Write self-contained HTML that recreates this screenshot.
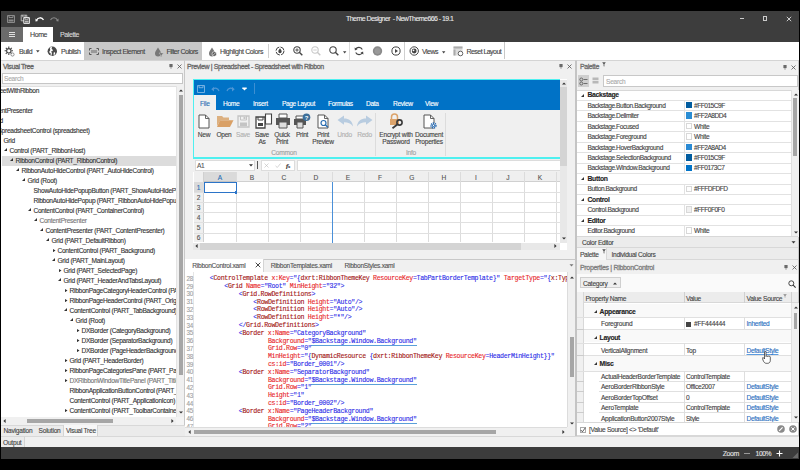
<!DOCTYPE html>
<html><head><meta charset="utf-8">
<style>
*{margin:0;padding:0;box-sizing:border-box}
html,body{width:800px;height:470px;overflow:hidden;background:#000}
body{position:relative;font-family:"Liberation Sans",sans-serif;font-size:7px;color:#333}
.a{position:absolute}
.t{position:absolute;white-space:nowrap;line-height:8px;font-size:7px;letter-spacing:-0.35px;-webkit-text-stroke:0.12px currentColor}
</style></head><body>
<!-- window -->
<div class="a" id="win" style="left:1px;top:11px;width:798px;height:448px;background:#f0f0f0"></div>
<!-- title bar -->
<div class="a" style="left:1px;top:11px;width:798px;height:31px;background:#3d3d3d"></div>
<svg class="a" style="left:6px;top:14px" width="10" height="10" viewBox="0 0 10 10"><path d="M1.5 1.5h7v7h-7z" fill="none" stroke="#8a8a8a" stroke-width="1"/><path d="M3 1.5v2h4v-2" fill="none" stroke="#8a8a8a"/><rect x="2.5" y="5.5" width="5" height="2" fill="#8a8a8a"/></svg>
<svg class="a" style="left:20px;top:14px" width="11" height="11" viewBox="0 0 11 11"><path d="M1.2 1.2h5.6v5.6H1.2z" fill="none" stroke="#d0d0d0" stroke-width="0.8"/><path d="M2.5 1.2v1.6h3V1.2" fill="none" stroke="#d0d0d0" stroke-width="0.6"/><path d="M3.8 3.6h5.6v5.8H3.8z" fill="#3d3d3d" stroke="#fff" stroke-width="0.9"/><path d="M5 3.6v1.7h3.2V3.6" fill="none" stroke="#fff" stroke-width="0.6"/><rect x="4.8" y="6.6" width="3.8" height="2" fill="#bbb"/></svg>
<svg class="a" style="left:35px;top:15px" width="10" height="7" viewBox="0 0 10 7"><path d="M1.5 5.2C3 2 7 2 8.5 5" fill="none" stroke="#fff" stroke-width="1.3"/><path d="M0.5 3.5l2.5 2.5l-2.5 0.5z" fill="#fff"/></svg>
<svg class="a" style="left:49px;top:15px" width="10" height="7" viewBox="0 0 10 7"><path d="M1.5 5C3 2 7 2 8.5 5.2" fill="none" stroke="#8a8a8a" stroke-width="1.1"/><path d="M9.5 3.5l-2.5 2.5l2.5 0.5z" fill="#8a8a8a"/></svg>
<div class="t" style="left:346px;top:15px;color:#e8e8e8;letter-spacing:-0.55px">Theme Designer &nbsp;- NewTheme666 - 19.1</div>
<div class="a" style="left:739.5px;top:18px;width:4.5px;height:0.8px;background:#ccc"></div>
<div class="a" style="left:763px;top:16px;width:4px;height:4.5px;border:0.8px solid #ccc"></div>
<svg class="a" style="left:785.5px;top:15.5px" width="6" height="6" viewBox="0 0 6 6"><path d="M0.8 0.8L5.2 5.2M5.2 0.8L0.8 5.2" stroke="#ddd" stroke-width="0.9"/></svg>
<!-- tab row -->
<div class="a" style="left:1px;top:27px;width:22px;height:15px;background:#6b6b6b"></div>
<div class="a" style="left:8.5px;top:31.5px;width:6px;height:1px;background:#e0e0e0"></div>
<div class="a" style="left:8.5px;top:33.8px;width:6px;height:1px;background:#e0e0e0"></div>
<div class="a" style="left:8.5px;top:36px;width:6px;height:1px;background:#e0e0e0"></div>
<div class="a" style="left:23px;top:27px;width:30px;height:15px;background:#fff"></div>
<div class="t" style="left:30px;top:31px;color:#444;letter-spacing:-0.4px">Home</div>
<div class="t" style="left:60px;top:31px;color:#d8d8d8;letter-spacing:-0.4px">Palette</div>
<!-- ribbon -->
<div class="a" style="left:1px;top:42px;width:798px;height:19px;background:#fff;border-bottom:1px solid #d8d8d8"></div>
<div class="a" style="left:84px;top:42px;width:118px;height:18px;background:#c8c8c8"></div>
<svg class="a" style="left:4px;top:45.5px" width="11" height="11" viewBox="0 0 11 11"><g fill="none" stroke="#444" stroke-width="1.1"><circle cx="4.8" cy="4.8" r="2.2"/><path d="M4.8 0.6v1.6M4.8 7.4v1.6M0.6 4.8h1.6M7.4 4.8h1.6M1.8 1.8l1.1 1.1M6.7 6.7l1.1 1.1M1.8 7.8l1.1-1.1M6.7 2.9l1.1-1.1"/></g><circle cx="8.5" cy="8.5" r="1.6" fill="#fff" stroke="#777" stroke-width="0.8"/></svg>
<div class="t" style="left:19px;top:48px;letter-spacing:-0.5px;color:#444">Build</div>
<svg class="a" style="left:36px;top:50px" width="4" height="3" viewBox="0 0 4 3"><path d="M0 0.3h3.6L1.8 2.6z" fill="#444"/></svg>
<svg class="a" style="left:47px;top:45.5px" width="11" height="11" viewBox="0 0 11 11"><circle cx="5.3" cy="5.3" r="4.7" fill="#4a4a4a"/><path d="M3 1.6C2.6 2.6 3.4 3.2 3.2 4.2C3 5 2 5.2 2.3 6.2C2.6 7 3.6 6.8 3.8 7.8L3.5 9.6L4.4 9.7L4.8 8C5.2 7 4.6 6.2 4 5.6C4.6 5.2 5.6 5.4 5.8 4.6C6 3.6 5 3.4 4.6 2.6L5.2 0.8z" fill="#fff"/><path d="M6.8 6.4C7.6 6.2 8.4 6.6 8.2 7.6L7.2 9.2L6.6 8.8C6.8 8 6.4 7 6.8 6.4z" fill="#fff"/></svg>
<div class="t" style="left:61px;top:48px;letter-spacing:-0.5px;color:#444">Publish</div>
<svg class="a" style="left:88.5px;top:47.5px" width="10" height="7" viewBox="0 0 10 7"><path d="M0.5 2.5V0.5h2M7.5 0.5h2v2M9.5 4.5v2h-2M2.5 6.5h-2v-2" fill="none" stroke="#555" stroke-width="1"/><rect x="2" y="2" width="6" height="3" fill="#999"/></svg>
<div class="t" style="left:102px;top:48px;letter-spacing:-0.5px;color:#444">Inspect Element</div>
<svg class="a" style="left:153.5px;top:46.5px" width="10" height="10" viewBox="0 0 10 10"><path d="M4 0.5C2.5 3 1 4.5 1 6.5a3 3 0 0 0 6 0C7 4.5 5.5 3 4 0.5z" fill="#777"/><path d="M5 6h4.5l-1.8 2v1.5l-1 0.5v-2z" fill="#666" stroke="#c8c8c8" stroke-width="0.5"/></svg>
<div class="t" style="left:166.5px;top:48px;letter-spacing:-0.5px;color:#444">Filter Colors</div>
<svg class="a" style="left:207.5px;top:46.5px" width="10" height="10" viewBox="0 0 10 10"><path d="M4 0.5C2.5 3 1 4.5 1 6.5a3 3 0 0 0 6 0C7 4.5 5.5 3 4 0.5z" fill="#777"/><circle cx="6.3" cy="7" r="2.3" fill="#555" stroke="#fff" stroke-width="0.6"/><path d="M5.3 8l2-2" stroke="#fff" stroke-width="0.7"/></svg>
<div class="t" style="left:220px;top:48px;letter-spacing:-0.4px;color:#444">Highlight Colors</div>
<div class="a" style="left:268px;top:44px;width:1px;height:14px;background:#d0d0d0"></div>
<svg class="a" style="left:274.5px;top:46px" width="10" height="10" viewBox="0 0 10 10"><circle cx="5" cy="5" r="4" fill="none" stroke="#444" stroke-width="1" stroke-dasharray="5 1.3"/><path d="M5 2.3C4 3.8 3.3 4.6 3.3 5.6a1.7 1.7 0 0 0 3.4 0C6.7 4.6 6 3.8 5 2.3z" fill="#444"/></svg>
<svg class="a" style="left:292.5px;top:45.5px" width="10" height="10" viewBox="0 0 10 10"><circle cx="4" cy="4" r="3.2" fill="none" stroke="#444" stroke-width="1.1"/><path d="M6.3 6.3l3 3" stroke="#444" stroke-width="1.4"/><path d="M2.3 4h3.4M4 2.3v3.4" stroke="#444" stroke-width="0.9"/></svg>
<svg class="a" style="left:310.5px;top:45.5px" width="10" height="10" viewBox="0 0 10 10"><circle cx="4" cy="4" r="3.2" fill="none" stroke="#c8c8c8" stroke-width="1.1"/><path d="M6.3 6.3l3 3" stroke="#c8c8c8" stroke-width="1.4"/><path d="M2.3 4h3.4" stroke="#c8c8c8" stroke-width="0.9"/></svg>
<svg class="a" style="left:328.5px;top:45.5px" width="10" height="10" viewBox="0 0 10 10"><circle cx="4" cy="4" r="3.2" fill="none" stroke="#444" stroke-width="1.1"/><path d="M6.3 6.3l3 3" stroke="#444" stroke-width="1.4"/></svg>
<svg class="a" style="left:342.5px;top:50.5px" width="4" height="3" viewBox="0 0 4 3"><path d="M0 0.3h3.4L1.7 2.4z" fill="#444"/></svg>
<div class="a" style="left:349px;top:42px;width:1px;height:17.5px;background:#dcdcdc"></div>
<svg class="a" style="left:354px;top:46px" width="10" height="10" viewBox="0 0 10 10"><g fill="none" stroke="#444" stroke-width="1.1"><path d="M8.3 3.6A3.8 3.8 0 0 0 1.6 3.2"/><path d="M1.7 6.4A3.8 3.8 0 0 0 8.4 6.8"/></g><path d="M0.6 1.5l0.3 3l2.6-1.2z" fill="#444"/><path d="M9.4 8.5l-0.3-3l-2.6 1.2z" fill="#444"/></svg>
<svg class="a" style="left:371.5px;top:46px" width="11" height="10" viewBox="0 0 11 10"><circle cx="5.5" cy="5" r="4.7" fill="#8a8a8a"/><circle cx="5.5" cy="5" r="3" fill="#999"/></svg>
<svg class="a" style="left:390.5px;top:46px" width="10" height="10" viewBox="0 0 10 10"><circle cx="5" cy="5" r="4.1" fill="none" stroke="#444" stroke-width="1"/><path d="M4 3v4l3-2z" fill="#444"/></svg>
<div class="a" style="left:404px;top:42px;width:1px;height:17.5px;background:#d0d0d0"></div>
<svg class="a" style="left:408.5px;top:46px" width="11" height="10" viewBox="0 0 11 10"><circle cx="5.2" cy="5" r="4.2" fill="none" stroke="#444" stroke-width="1"/><circle cx="5.2" cy="5" r="2.4" fill="#444"/><circle cx="4.5" cy="4.3" r="0.9" fill="#fff"/></svg>
<div class="t" style="left:422px;top:48px;letter-spacing:-0.5px;color:#444">Views</div>
<svg class="a" style="left:441.5px;top:50.5px" width="4" height="3" viewBox="0 0 4 3"><path d="M0 0.3h3.4L1.7 2.4z" fill="#444"/></svg>
<svg class="a" style="left:452.5px;top:45.5px" width="11" height="11" viewBox="0 0 11 11"><rect x="0.5" y="0.5" width="9" height="9" fill="#ddd"/><rect x="0.5" y="0.5" width="9" height="2" fill="#aaa"/><rect x="0.5" y="3.5" width="2" height="6" fill="#aaa"/><circle cx="7.5" cy="7.5" r="2.3" fill="#fff" stroke="#555" stroke-width="0.9"/></svg>
<div class="t" style="left:466.5px;top:48px;letter-spacing:-0.55px;color:#444">Reset Layout</div>
<div class="a" style="left:504px;top:42px;width:1px;height:17px;background:#c8c8c8"></div>

<!-- left panel -->
<div class="a" style="left:1px;top:60px;width:184px;height:365px;background:#f0f0f0;border-top:1px solid #d4d4d4;border-right:1px solid #c8c8c8"></div>
<div class="t" style="left:3px;top:62.7px;color:#666;letter-spacing:-0.4px;-webkit-text-stroke:0.3px #666">Visual Tree</div>
<svg class="a" style="left:168.6px;top:63.8px" width="4" height="5" viewBox="0 0 4 5"><rect x="0.4" y="0" width="3.2" height="3.1" fill="#6a6a6a"/><path d="M2 3v1.8" stroke="#777" stroke-width="0.7"/></svg>
<svg class="a" style="left:176.5px;top:63.5px" width="5" height="5" viewBox="0 0 5 5"><path d="M0.5 0.5L4.5 4.5M4.5 0.5L0.5 4.5" stroke="#555" stroke-width="0.8"/></svg>
<div class="a" style="left:2px;top:73px;width:181px;height:11px;background:#fff;border:1px solid #c6c6c6"></div>
<div class="t" style="left:4px;top:75px;color:#aaa;font-size:6.6px;letter-spacing:-0.25px">Search</div>
<div class="a" style="left:1px;top:85.5px;width:183px;height:331px;background:#fff;overflow:hidden;border-top:1px solid #e0e0e0">
<div class="a" style="left:0.5px;top:69.5px;width:175px;height:10px;background:#dcdcdc"></div>
<div class="t" style="left:-27.5px;top:-1.0px;line-height:10px;font-size:6.6px;letter-spacing:-0.28px;color:#333">SpreadsheetWithRibbon</div>
<div class="t" style="left:-21.5px;top:9.0px;line-height:10px;font-size:6.6px;letter-spacing:-0.28px;color:#333">Grid</div>
<div class="t" style="left:-15.5px;top:19.0px;line-height:10px;font-size:6.6px;letter-spacing:-0.28px;color:#333">ContentPresenter</div>
<div class="t" style="left:-9.5px;top:29.0px;line-height:10px;font-size:6.6px;letter-spacing:-0.28px;color:#333">Grid</div>
<div class="t" style="left:-3.5px;top:39.0px;line-height:10px;font-size:6.6px;letter-spacing:-0.28px;color:#333">SpreadsheetControl (spreadsheet)</div>
<div class="t" style="left:2.5px;top:49.0px;line-height:10px;font-size:6.6px;letter-spacing:-0.28px;color:#333">Grid</div>
<div class="t" style="left:8.5px;top:59.0px;line-height:10px;font-size:6.6px;letter-spacing:-0.28px;color:#333">Control (PART_RibbonHost)</div>
<svg class="a" style="left:3.3px;top:61.9px" width="3" height="3" viewBox="0 0 3 3"><path d="M3 0V3H0z" fill="#333"/></svg>
<div class="t" style="left:14.5px;top:69.0px;line-height:10px;font-size:6.6px;letter-spacing:-0.28px;color:#333">RibbonControl (PART_RibbonControl)</div>
<svg class="a" style="left:9.3px;top:71.9px" width="3" height="3" viewBox="0 0 3 3"><path d="M3 0V3H0z" fill="#333"/></svg>
<div class="t" style="left:20.5px;top:79.0px;line-height:10px;font-size:6.6px;letter-spacing:-0.28px;color:#333">RibbonAutoHideControl (PART_AutoHideControl)</div>
<svg class="a" style="left:15.3px;top:81.9px" width="3" height="3" viewBox="0 0 3 3"><path d="M3 0V3H0z" fill="#333"/></svg>
<div class="t" style="left:26.5px;top:89.0px;line-height:10px;font-size:6.6px;letter-spacing:-0.28px;color:#333">Grid (Root)</div>
<svg class="a" style="left:21.3px;top:91.9px" width="3" height="3" viewBox="0 0 3 3"><path d="M3 0V3H0z" fill="#333"/></svg>
<div class="t" style="left:32.5px;top:99.0px;line-height:10px;font-size:6.6px;letter-spacing:-0.28px;color:#333">ShowAutoHidePopupButton (PART_ShowAutoHidePopupButton)</div>
<div class="t" style="left:32.5px;top:109.0px;line-height:10px;font-size:6.6px;letter-spacing:-0.28px;color:#333">RibbonAutoHidePopup (PART_RibbonAutoHidePopup)</div>
<div class="t" style="left:32.5px;top:119.0px;line-height:10px;font-size:6.6px;letter-spacing:-0.28px;color:#333">ContentControl (PART_ContainerControl)</div>
<svg class="a" style="left:27.3px;top:121.9px" width="3" height="3" viewBox="0 0 3 3"><path d="M3 0V3H0z" fill="#333"/></svg>
<div class="t" style="left:38.5px;top:129.0px;line-height:10px;font-size:6.6px;letter-spacing:-0.28px;color:#767676">ContentPresenter</div>
<svg class="a" style="left:33.3px;top:131.9px" width="3" height="3" viewBox="0 0 3 3"><path d="M3 0V3H0z" fill="#333"/></svg>
<div class="t" style="left:44.5px;top:139.0px;line-height:10px;font-size:6.6px;letter-spacing:-0.28px;color:#333">ContentPresenter (PART_ContentPresenter)</div>
<svg class="a" style="left:39.3px;top:141.9px" width="3" height="3" viewBox="0 0 3 3"><path d="M3 0V3H0z" fill="#333"/></svg>
<div class="t" style="left:50.5px;top:149.0px;line-height:10px;font-size:6.6px;letter-spacing:-0.28px;color:#333">Grid (PART_DefaultRibbon)</div>
<svg class="a" style="left:45.3px;top:151.9px" width="3" height="3" viewBox="0 0 3 3"><path d="M3 0V3H0z" fill="#333"/></svg>
<div class="t" style="left:56.5px;top:159.0px;line-height:10px;font-size:6.6px;letter-spacing:-0.28px;color:#333">ContentControl (PART_Background)</div>
<svg class="a" style="left:51.9px;top:162.0px" width="3" height="3.2" viewBox="0 0 3 3.2"><path d="M0 0L2.5 1.6L0 3.2z" fill="#333"/></svg>
<div class="t" style="left:56.5px;top:169.0px;line-height:10px;font-size:6.6px;letter-spacing:-0.28px;color:#333">Grid (PART_MainLayout)</div>
<svg class="a" style="left:51.3px;top:171.9px" width="3" height="3" viewBox="0 0 3 3"><path d="M3 0V3H0z" fill="#333"/></svg>
<div class="t" style="left:62.5px;top:179.0px;line-height:10px;font-size:6.6px;letter-spacing:-0.28px;color:#333">Grid (PART_SelectedPage)</div>
<svg class="a" style="left:57.9px;top:182.0px" width="3" height="3.2" viewBox="0 0 3 3.2"><path d="M0 0L2.5 1.6L0 3.2z" fill="#333"/></svg>
<div class="t" style="left:62.5px;top:189.0px;line-height:10px;font-size:6.6px;letter-spacing:-0.28px;color:#333">Grid (PART_HeaderAndTabsLayout)</div>
<svg class="a" style="left:57.3px;top:191.9px" width="3" height="3" viewBox="0 0 3 3"><path d="M3 0V3H0z" fill="#333"/></svg>
<div class="t" style="left:68.5px;top:199.0px;line-height:10px;font-size:6.6px;letter-spacing:-0.28px;color:#333">RibbonPageCategoryHeaderControl (PART_CategoryHeader)</div>
<svg class="a" style="left:63.9px;top:202.0px" width="3" height="3.2" viewBox="0 0 3 3.2"><path d="M0 0L2.5 1.6L0 3.2z" fill="#333"/></svg>
<div class="t" style="left:68.5px;top:209.0px;line-height:10px;font-size:6.6px;letter-spacing:-0.28px;color:#333">RibbonPageHeaderControl (PART_OriginalPageHeader)</div>
<svg class="a" style="left:63.9px;top:212.0px" width="3" height="3.2" viewBox="0 0 3 3.2"><path d="M0 0L2.5 1.6L0 3.2z" fill="#333"/></svg>
<div class="t" style="left:68.5px;top:219.0px;line-height:10px;font-size:6.6px;letter-spacing:-0.28px;color:#333">ContentControl (PART_TabBackground)</div>
<svg class="a" style="left:63.3px;top:221.9px" width="3" height="3" viewBox="0 0 3 3"><path d="M3 0V3H0z" fill="#333"/></svg>
<div class="t" style="left:74.5px;top:229.0px;line-height:10px;font-size:6.6px;letter-spacing:-0.28px;color:#333">Grid (Root)</div>
<svg class="a" style="left:69.3px;top:231.9px" width="3" height="3" viewBox="0 0 3 3"><path d="M3 0V3H0z" fill="#333"/></svg>
<div class="t" style="left:80.5px;top:239.0px;line-height:10px;font-size:6.6px;letter-spacing:-0.28px;color:#333">DXBorder (CategoryBackground)</div>
<svg class="a" style="left:75.9px;top:242.0px" width="3" height="3.2" viewBox="0 0 3 3.2"><path d="M0 0L2.5 1.6L0 3.2z" fill="#333"/></svg>
<div class="t" style="left:80.5px;top:249.0px;line-height:10px;font-size:6.6px;letter-spacing:-0.28px;color:#333">DXBorder (SeparatorBackground)</div>
<svg class="a" style="left:75.9px;top:252.0px" width="3" height="3.2" viewBox="0 0 3 3.2"><path d="M0 0L2.5 1.6L0 3.2z" fill="#333"/></svg>
<div class="t" style="left:80.5px;top:259.0px;line-height:10px;font-size:6.6px;letter-spacing:-0.28px;color:#333">DXBorder (PageHeaderBackground)</div>
<svg class="a" style="left:75.9px;top:262.0px" width="3" height="3.2" viewBox="0 0 3 3.2"><path d="M0 0L2.5 1.6L0 3.2z" fill="#333"/></svg>
<div class="t" style="left:68.5px;top:269.0px;line-height:10px;font-size:6.6px;letter-spacing:-0.28px;color:#333">Grid (PART_HeaderBorder)</div>
<svg class="a" style="left:63.9px;top:272.0px" width="3" height="3.2" viewBox="0 0 3 3.2"><path d="M0 0L2.5 1.6L0 3.2z" fill="#333"/></svg>
<div class="t" style="left:68.5px;top:279.0px;line-height:10px;font-size:6.6px;letter-spacing:-0.28px;color:#333">RibbonPageCategoriesPane (PART_PageCategoriesPane)</div>
<svg class="a" style="left:63.9px;top:282.0px" width="3" height="3.2" viewBox="0 0 3 3.2"><path d="M0 0L2.5 1.6L0 3.2z" fill="#333"/></svg>
<div class="t" style="left:68.5px;top:289.0px;line-height:10px;font-size:6.6px;letter-spacing:-0.28px;color:#767676">DXRibbonWindowTitlePanel (PART_TitlePanel)</div>
<svg class="a" style="left:63.9px;top:292.0px" width="3" height="3.2" viewBox="0 0 3 3.2"><path d="M0 0L2.5 1.6L0 3.2z" fill="#333"/></svg>
<div class="t" style="left:68.5px;top:299.0px;line-height:10px;font-size:6.6px;letter-spacing:-0.28px;color:#333">RibbonApplicationButtonControl (PART_ApplicationButton)</div>
<div class="t" style="left:68.5px;top:309.0px;line-height:10px;font-size:6.6px;letter-spacing:-0.28px;color:#333">ContentControl (PART_ApplicationIcon)</div>
<div class="t" style="left:68.5px;top:319.0px;line-height:10px;font-size:6.6px;letter-spacing:-0.28px;color:#333">ContentControl (PART_ToolbarContainer)</div>
<svg class="a" style="left:63.9px;top:322.0px" width="3" height="3.2" viewBox="0 0 3 3.2"><path d="M0 0L2.5 1.6L0 3.2z" fill="#333"/></svg>
</div>
<div class="a" style="left:176px;top:86px;width:8px;height:330.5px;background:#f0f0f0;border-left:1px solid #e4e4e4"></div>
<svg class="a" style="left:178.5px;top:88.5px" width="4" height="3" viewBox="0 0 4 3"><path d="M0 2.6h4L2 0.4z" fill="#333"/></svg>
<div class="a" style="left:178.5px;top:95px;width:4px;height:279.5px;background:#a6a6a6"></div>
<svg class="a" style="left:178.5px;top:410.5px" width="4" height="3" viewBox="0 0 4 3"><path d="M0 0.4h4L2 2.6z" fill="#333"/></svg>
<div class="a" style="left:1px;top:416.5px;width:175px;height:8.5px;background:#f0f0f0"></div>
<svg class="a" style="left:3px;top:419px" width="3" height="4" viewBox="0 0 3 4"><path d="M2.6 0v4L0.4 2z" fill="#333"/></svg>
<div class="a" style="left:27px;top:418.5px;width:85.5px;height:4px;background:#a6a6a6"></div>
<svg class="a" style="left:170.5px;top:419px" width="3" height="4" viewBox="0 0 3 4"><path d="M0.4 0v4L2.6 2z" fill="#333"/></svg>
<div class="a" style="left:176px;top:416.5px;width:8px;height:8.5px;background:#f4f4f4"></div>

<!-- center panel -->
<div class="a" style="left:185px;top:60px;width:391px;height:199px;background:#f0f0f0;border-top:1px solid #d4d4d4;border-right:1px solid #c4c4c4"></div>
<div class="t" style="left:187px;top:62.5px;color:#6a6a6a;letter-spacing:-0.38px;-webkit-text-stroke:0.3px #6a6a6a">Preview | Spreadsheet - Spreadsheet with Ribbon</div>
<svg class="a" style="left:559.4px;top:64.0px" width="4" height="5" viewBox="0 0 4 5"><rect x="0.4" y="0" width="3.2" height="3.1" fill="#6a6a6a"/><path d="M2 3v1.8" stroke="#777" stroke-width="0.7"/></svg>
<svg class="a" style="left:567.3px;top:63.8px" width="5" height="5" viewBox="0 0 5 5"><path d="M0.5 0.5L4.5 4.5M4.5 0.5L0.5 4.5" stroke="#555" stroke-width="0.8"/></svg>
<!-- preview surface -->
<div class="a" style="left:193px;top:79px;width:374px;height:171px;background:#fff"></div>
<!-- ribbon (cyan adorner) -->
<div class="a" style="left:193px;top:79px;width:366.5px;height:80px;background:#f0f0f0;border:1px solid #4ef0f0;border-bottom:2px solid #4ef0f0;border-right:none"></div>
<div class="a" style="left:194px;top:80px;width:365.5px;height:30.3px;background:#0072c6"></div>
<svg class="a" style="left:196.5px;top:84.5px" width="8" height="8" viewBox="0 0 8 8"><path d="M0.5 0.5h7v7h-7z M2 0.5v2.2h4V0.5" fill="none" stroke="#7fb6e4" stroke-width="0.9"/></svg>
<svg class="a" style="left:210.5px;top:85.5px" width="9" height="6" viewBox="0 0 9 6"><path d="M2 3.2C4 1.5 7 2 8 5" fill="none" stroke="#4e96d6" stroke-width="1.2"/><path d="M0.3 3.2L3 0.8v4.8z" fill="#4e96d6"/></svg>
<svg class="a" style="left:225.5px;top:85.5px" width="9" height="6" viewBox="0 0 9 6"><path d="M7 3.2C5 1.5 2 2 1 5" fill="none" stroke="#4e96d6" stroke-width="1.2"/><path d="M8.7 3.2L6 0.8v4.8z" fill="#4e96d6"/></svg>
<svg class="a" style="left:241.5px;top:86.5px" width="5" height="4" viewBox="0 0 5 4"><path d="M0.3 0.5h4.4v0.8L2.5 3.5L0.3 1.3z" fill="#fff"/></svg>
<div class="a" style="left:254px;top:82.5px;width:1px;height:11.5px;background:#3d8fd2"></div>
<div class="a" style="left:194px;top:95px;width:21.8px;height:15.3px;background:#f0f0f0"></div>
<div class="t" style="left:200px;top:100px;color:#2b6fb5;font-size:6.6px;letter-spacing:-0.2px">File</div>
<div class="t" style="left:223px;top:100px;color:#fff;font-size:6.6px;letter-spacing:-0.3px">Home</div>
<div class="t" style="left:253px;top:100px;color:#fff;font-size:6.6px;letter-spacing:-0.3px">Insert</div>
<div class="t" style="left:282px;top:100px;color:#fff;font-size:6.6px;letter-spacing:-0.38px">Page Layout</div>
<div class="t" style="left:328px;top:100px;color:#fff;font-size:6.6px;letter-spacing:-0.33px">Formulas</div>
<div class="t" style="left:366px;top:100px;color:#fff;font-size:6.6px;letter-spacing:-0.3px">Data</div>
<div class="t" style="left:393px;top:100px;color:#fff;font-size:6.6px;letter-spacing:-0.3px">Review</div>
<div class="t" style="left:425px;top:100px;color:#fff;font-size:6.6px;letter-spacing:-0.3px">View</div>
<!-- ribbon buttons -->
<svg class="a" style="left:197.5px;top:113.5px" width="12" height="15" viewBox="0 0 12 15"><path d="M1 1h6.5l3.5 3.5V14H1z" fill="#fff" stroke="#555" stroke-width="1"/><path d="M7.5 1v3.5H11" fill="none" stroke="#555" stroke-width="0.9"/></svg>
<svg class="a" style="left:215.5px;top:114.5px" width="18" height="13" viewBox="0 0 18 13"><path d="M1 1h5l1.5 1.5H13V5H4.5L1 11z" fill="#dcb080"/><path d="M4 5.3h13.5L14 12H1z" fill="#d9a066"/></svg>
<svg class="a" style="left:236.5px;top:114.5px" width="13" height="13" viewBox="0 0 13 13"><path d="M1 1h11v11H1z" fill="none" stroke="#c4c4c4" stroke-width="1.3"/><path d="M3.5 1v4h6V1" fill="none" stroke="#c4c4c4" stroke-width="1"/><rect x="6.5" y="2" width="2" height="2" fill="#c4c4c4"/><rect x="3" y="7.5" width="7" height="3.5" fill="#c4c4c4"/></svg>
<svg class="a" style="left:254.5px;top:112.5px" width="18" height="16" viewBox="0 0 18 16"><path d="M1 4h9v11H1z" fill="#fff" stroke="#444" stroke-width="1.3"/><path d="M3 4v3h5V4" fill="none" stroke="#444" stroke-width="1"/><rect x="3" y="10" width="5" height="3" fill="#444"/><path d="M10.5 1h6v10h-6z" fill="#fff" stroke="#444" stroke-width="1.1"/></svg>
<svg class="a" style="left:274.5px;top:112.5px" width="16" height="16" viewBox="0 0 16 16"><path d="M4 1h8v4H4z" fill="#fff" stroke="#555" stroke-width="1"/><path d="M1 5h14v7H1z" fill="#555"/><path d="M4 9h8v6H4z" fill="#ddd" stroke="#555" stroke-width="1"/></svg>
<svg class="a" style="left:292.5px;top:112.5px" width="18" height="16" viewBox="0 0 18 16"><path d="M3 3h8v3H3z" fill="#fff" stroke="#555" stroke-width="1"/><path d="M1 6h12v6H1z" fill="#555"/><path d="M4 9h6v6H4z" fill="#ddd" stroke="#555" stroke-width="1"/><circle cx="13.5" cy="4.3" r="3.8" fill="#3d6f9a"/><text x="13.5" y="6.6" font-size="6" font-family="Liberation Sans" fill="#fff" text-anchor="middle" font-weight="bold">?</text></svg>
<svg class="a" style="left:316.5px;top:113.5px" width="13" height="16" viewBox="0 0 13 16"><path d="M1 1h6.5l3.5 3.5V14H1z" fill="#fff" stroke="#555" stroke-width="1"/><path d="M7.5 1v3.5H11" fill="none" stroke="#555" stroke-width="0.9"/><circle cx="6.5" cy="9" r="2.5" fill="none" stroke="#2a6db0" stroke-width="1.2"/><path d="M8.3 10.8l2.5 2.5" stroke="#2a6db0" stroke-width="1.4"/></svg>
<svg class="a" style="left:336.5px;top:114.5px" width="17" height="12" viewBox="0 0 17 12"><path d="M0.5 5L7 0.5V3.5C12 3.5 15.5 6 16 11.5C14 8.5 11 7.3 7 7.3V9.8z" fill="#b8cce0"/></svg>
<svg class="a" style="left:355.5px;top:114.5px" width="17" height="12" viewBox="0 0 17 12"><path d="M16.5 5L10 0.5V3.5C5 3.5 1.5 6 1 11.5C3 8.5 6 7.3 10 7.3V9.8z" fill="#b8cce0"/></svg>
<svg class="a" style="left:388.5px;top:112.5px" width="15" height="16" viewBox="0 0 15 16"><path d="M2.5 6V4a3 3 0 0 1 6 0v2" fill="none" stroke="#dca36a" stroke-width="1.5"/><rect x="1" y="6" width="9" height="6" fill="#dca36a"/><circle cx="10.5" cy="9.5" r="2.6" fill="none" stroke="#3a3a3a" stroke-width="1.6"/><path d="M8.6 11.3L3.5 15.2" stroke="#3a3a3a" stroke-width="1.8"/></svg>
<svg class="a" style="left:422.5px;top:113.5px" width="15" height="16" viewBox="0 0 15 16"><path d="M1 1h6.5l3.5 3.5V14H1z" fill="#fff" stroke="#555" stroke-width="1"/><path d="M7.5 1v3.5H11" fill="none" stroke="#555" stroke-width="0.9"/><circle cx="10.5" cy="11.5" r="2.4" fill="#fff" stroke="#2c6cb0" stroke-width="1.6" stroke-dasharray="1.2 0.7"/><circle cx="10.5" cy="11.5" r="1.6" fill="#2c6cb0"/><circle cx="10.5" cy="11.5" r="0.7" fill="#fff"/></svg>
<div class="t" style="left:192px;width:24px;text-align:center;top:131px;font-size:6.6px;letter-spacing:-0.3px;color:#444">New</div>
<div class="t" style="left:212px;width:24px;text-align:center;top:131px;font-size:6.6px;letter-spacing:-0.3px;color:#444">Open</div>
<div class="t" style="left:231px;width:24px;text-align:center;top:131px;font-size:6.6px;letter-spacing:-0.3px;color:#b0b0b0">Save</div>
<div class="t" style="left:250px;width:24px;text-align:center;top:131px;font-size:6.6px;letter-spacing:-0.3px;color:#444;line-height:7px">Save<br>As</div>
<div class="t" style="left:270px;width:24px;text-align:center;top:131px;font-size:6.6px;letter-spacing:-0.3px;color:#444;line-height:7px">Quick<br>Print</div>
<div class="t" style="left:290px;width:24px;text-align:center;top:131px;font-size:6.6px;letter-spacing:-0.3px;color:#444">Print</div>
<div class="t" style="left:311px;width:24px;text-align:center;top:131px;font-size:6.6px;letter-spacing:-0.3px;color:#444;line-height:7px">Print<br>Preview</div>
<div class="t" style="left:332.5px;width:24px;text-align:center;top:131px;font-size:6.6px;letter-spacing:-0.3px;color:#b0b0b0">Undo</div>
<div class="t" style="left:352.5px;width:24px;text-align:center;top:131px;font-size:6.6px;letter-spacing:-0.3px;color:#b0b0b0">Redo</div>
<div class="t" style="left:259px;width:50px;text-align:center;top:149px;font-size:6.6px;letter-spacing:-0.2px;color:#a0a0a0">Common</div>
<div class="a" style="left:375px;top:112.5px;width:1px;height:43px;background:#dcdcdc"></div>
<div class="t" style="left:376px;width:40px;text-align:center;top:131px;font-size:6.6px;letter-spacing:-0.2px;color:#444;line-height:7px">Encrypt with<br>Password</div>
<div class="t" style="left:413px;width:32px;text-align:center;top:131px;font-size:6.6px;letter-spacing:-0.25px;color:#444;line-height:7px">Document<br>Properties</div>
<div class="t" style="left:396px;width:30px;text-align:center;top:148.5px;font-size:6.6px;letter-spacing:-0.2px;color:#a0a0a0">Info</div>
<div class="a" style="left:445px;top:112.5px;width:1px;height:43px;background:#dcdcdc"></div>
<!-- preview vscroll -->
<div class="a" style="left:559.5px;top:80px;width:7.5px;height:162.5px;background:#e8e8e8"></div>
<div class="a" style="left:559.5px;top:87px;width:7.5px;height:79px;background:#d4d4d4"></div>
<svg class="a" style="left:561.5px;top:82px" width="4" height="3" viewBox="0 0 4 3"><path d="M0 2.6h4L2 0.4z" fill="#333"/></svg>
<svg class="a" style="left:561.5px;top:236.5px" width="4" height="3" viewBox="0 0 4 3"><path d="M0 0.4h4L2 2.6z" fill="#333"/></svg>
<!-- formula bar -->
<div class="a" style="left:193px;top:159px;width:366.5px;height:13.3px;background:#f0f0f0"></div>
<div class="a" style="left:194.5px;top:160px;width:60px;height:10.5px;background:#fff;border:1px solid #dcdcdc"></div>
<div class="t" style="left:197px;top:162px;font-size:6.6px;letter-spacing:-0.3px;color:#555">A1</div>
<svg class="a" style="left:248.5px;top:164px" width="4" height="3" viewBox="0 0 4 3"><path d="M0 0.3h4L2 2.6z" fill="#333"/></svg>
<div class="a" style="left:257px;top:161px;width:1px;height:7.5px;background:#555"></div>
<div class="a" style="left:260.5px;top:160px;width:34px;height:10.5px;background:#fff;border:1px solid #dcdcdc"></div>
<svg class="a" style="left:263.5px;top:162.5px" width="5" height="5" viewBox="0 0 5 5"><path d="M0.5 0.5l4 4M4.5 0.5l-4 4" stroke="#bbb" stroke-width="0.6"/></svg>
<svg class="a" style="left:274.5px;top:162.5px" width="6" height="5" viewBox="0 0 6 5"><path d="M0.5 2.8l1.8 1.7l3.2-4" fill="none" stroke="#bbb" stroke-width="0.6"/></svg>
<div class="t" style="left:286px;top:161.5px;font-size:7px;font-family:'Liberation Serif',serif;font-style:italic;font-weight:bold;color:#333">f<span style="font-size:4.5px">x</span></div>
<div class="a" style="left:296.5px;top:160px;width:263px;height:10.5px;background:#fff;border:1px solid #dcdcdc;border-right:none"></div>
<!-- grid -->
<div class="a" style="left:193px;top:172.3px;width:366.5px;height:70px;background:#fff"></div>
<div class="a" style="left:193.5px;top:172.3px;width:366px;height:9.7px;background:#efefef;border-bottom:1px solid #d0d0d0"></div>
<div class="a" style="left:193.5px;top:172.3px;width:10.3px;height:70px;background:#efefef;border-right:1px solid #d0d0d0"></div>
<div class="a" style="left:203.8px;top:172.3px;width:32px;height:9.7px;background:#dadada;border-bottom:1px solid #c4c4c4"></div>
<div class="a" style="left:193.5px;top:182px;width:10.3px;height:10.5px;background:#dadada"></div>
<div class="a" style="left:235.75px;top:172.3px;width:1px;height:70px;background:#dcdcdc"></div>
<div class="t" style="left:203.75px;width:32px;text-align:center;top:174px;font-size:6.6px;color:#2b6fb5">A</div>
<div class="a" style="left:267.75px;top:172.3px;width:1px;height:70px;background:#dcdcdc"></div>
<div class="t" style="left:235.75px;width:32px;text-align:center;top:174px;font-size:6.6px;color:#555">B</div>
<div class="a" style="left:299.75px;top:172.3px;width:1px;height:70px;background:#dcdcdc"></div>
<div class="t" style="left:267.75px;width:32px;text-align:center;top:174px;font-size:6.6px;color:#555">C</div>
<div class="a" style="left:331.75px;top:172.3px;width:1px;height:70px;background:#dcdcdc"></div>
<div class="t" style="left:299.75px;width:32px;text-align:center;top:174px;font-size:6.6px;color:#555">D</div>
<div class="a" style="left:363.75px;top:172.3px;width:1px;height:70px;background:#dcdcdc"></div>
<div class="t" style="left:331.75px;width:32px;text-align:center;top:174px;font-size:6.6px;color:#555">E</div>
<div class="a" style="left:395.75px;top:172.3px;width:1px;height:70px;background:#dcdcdc"></div>
<div class="t" style="left:363.75px;width:32px;text-align:center;top:174px;font-size:6.6px;color:#555">F</div>
<div class="a" style="left:427.75px;top:172.3px;width:1px;height:70px;background:#dcdcdc"></div>
<div class="t" style="left:395.75px;width:32px;text-align:center;top:174px;font-size:6.6px;color:#555">G</div>
<div class="a" style="left:459.75px;top:172.3px;width:1px;height:70px;background:#dcdcdc"></div>
<div class="t" style="left:427.75px;width:32px;text-align:center;top:174px;font-size:6.6px;color:#555">H</div>
<div class="a" style="left:491.75px;top:172.3px;width:1px;height:70px;background:#dcdcdc"></div>
<div class="t" style="left:459.75px;width:32px;text-align:center;top:174px;font-size:6.6px;color:#555">I</div>
<div class="a" style="left:523.75px;top:172.3px;width:1px;height:70px;background:#dcdcdc"></div>
<div class="t" style="left:491.75px;width:32px;text-align:center;top:174px;font-size:6.6px;color:#555">J</div>
<div class="a" style="left:555.75px;top:172.3px;width:1px;height:70px;background:#dcdcdc"></div>
<div class="t" style="left:523.75px;width:32px;text-align:center;top:174px;font-size:6.6px;color:#555">K</div>
<div class="a" style="left:193.5px;top:192.10px;width:366px;height:1px;background:#e0e0e0"></div>
<div class="t" style="left:193.5px;width:10px;text-align:center;top:183.50px;font-size:6.6px;color:#2b6fb5">1</div>
<div class="a" style="left:193.5px;top:202.20px;width:366px;height:1px;background:#e0e0e0"></div>
<div class="t" style="left:193.5px;width:10px;text-align:center;top:193.60px;font-size:6.6px;color:#555">2</div>
<div class="a" style="left:193.5px;top:212.30px;width:366px;height:1px;background:#e0e0e0"></div>
<div class="t" style="left:193.5px;width:10px;text-align:center;top:203.70px;font-size:6.6px;color:#555">3</div>
<div class="a" style="left:193.5px;top:222.40px;width:366px;height:1px;background:#e0e0e0"></div>
<div class="t" style="left:193.5px;width:10px;text-align:center;top:213.80px;font-size:6.6px;color:#555">4</div>
<div class="a" style="left:193.5px;top:232.50px;width:366px;height:1px;background:#e0e0e0"></div>
<div class="t" style="left:193.5px;width:10px;text-align:center;top:223.90px;font-size:6.6px;color:#555">5</div>
<div class="a" style="left:193.5px;top:242.60px;width:366px;height:1px;background:#e0e0e0"></div>
<div class="t" style="left:193.5px;width:10px;text-align:center;top:234.00px;font-size:6.6px;color:#555">6</div>
<div class="a" style="left:203.5px;top:181.5px;width:33px;height:11px;border:1.2px solid #2b74c8"></div>
<div class="a" style="left:234.8px;top:191px;width:2.5px;height:2.5px;background:#2b74c8"></div>
<div class="a" style="left:331.5px;top:182px;width:1px;height:60.5px;background:#4a90d9"></div>
<div class="a" style="left:193px;top:242.5px;width:366.5px;height:7px;background:#e8e8e8"></div>
<div class="a" style="left:200px;top:242.5px;width:321px;height:7px;background:#d4d4d4"></div>
<svg class="a" style="left:195px;top:244px" width="3" height="4" viewBox="0 0 3 4"><path d="M2.6 0v4L0.4 2z" fill="#333"/></svg>
<svg class="a" style="left:554px;top:244px" width="3" height="4" viewBox="0 0 3 4"><path d="M0.4 0v4L2.6 2z" fill="#333"/></svg>


<!-- code editor -->
<div class="a" style="left:185px;top:258.5px;width:391px;height:178px;background:#f0f0f0;border-top:1px solid #c8c8c8;border-right:1px solid #c4c4c4"></div>
<div class="a" style="left:185px;top:259px;width:79px;height:13.5px;background:#fff;border-right:1px solid #d4d4d4"></div>
<div class="t" style="left:192.3px;top:262px;font-size:6.6px;letter-spacing:-0.27px;color:#555">RibbonControl.xaml</div>
<svg class="a" style="left:255px;top:262px" width="6" height="6" viewBox="0 0 6 6"><path d="M0.7 0.7L5.3 5.3M5.3 0.7L0.7 5.3" stroke="#333" stroke-width="0.9"/></svg>
<div class="t" style="left:270.7px;top:262px;font-size:6.6px;letter-spacing:-0.27px;color:#555">RibbonTemplates.xaml</div>
<div class="t" style="left:344.5px;top:262px;font-size:6.6px;letter-spacing:-0.27px;color:#555">RibbonStyles.xaml</div>
<svg class="a" style="left:569px;top:264px" width="5" height="3" viewBox="0 0 5 3"><path d="M0.5 0.3h4L2.5 2.6z" fill="#777"/></svg>
<div class="a" style="left:185px;top:272px;width:382.5px;height:155px;background:#fff;overflow:hidden">
<div class="a" style="left:8.2px;top:0;width:0.8px;height:155px;background:#e6e6e6"></div>
<div class="t" style="left:0px;width:8px;text-align:right;top:2.70px;font-size:6.3px;letter-spacing:-0.2px;color:#a0a0a0">28</div>
<div class="t" style="left:24.80px;top:3.10px;line-height:8px;font-family:'Liberation Mono',monospace;font-size:6.6px;letter-spacing:-0.33px"><span style="color:#2f2fe8">&lt;</span><span style="color:#a31515">ControlTemplate</span><span style="color:#e8262a"> x:Key</span><span style="color:#2f2fe8">=&quot;{</span><span style="color:#a31515">dxrt:RibbonThemeKey</span><span style="color:#e8262a"> ResourceKey</span><span style="color:#2f2fe8">=TabPartBorderTemplate}&quot;</span><span style="color:#e8262a"> TargetType</span><span style="color:#2f2fe8">=&quot;{</span><span style="color:#a31515">x:Type</span><span style="color:#2f2fe8"> dxr:RibbonControl}&quot;&gt;</span></div>
<div class="t" style="left:0px;width:8px;text-align:right;top:10.50px;font-size:6.3px;letter-spacing:-0.2px;color:#a0a0a0">29</div>
<div class="t" style="left:39.32px;top:10.90px;line-height:8px;font-family:'Liberation Mono',monospace;font-size:6.6px;letter-spacing:-0.33px"><span style="color:#2f2fe8">&lt;</span><span style="color:#a31515">Grid</span><span style="color:#e8262a"> Name</span><span style="color:#2f2fe8">=&quot;Root&quot;</span><span style="color:#e8262a"> MinHeight</span><span style="color:#2f2fe8">=&quot;32&quot;&gt;</span></div>
<div class="t" style="left:0px;width:8px;text-align:right;top:18.30px;font-size:6.3px;letter-spacing:-0.2px;color:#a0a0a0">30</div>
<div class="t" style="left:53.84px;top:18.70px;line-height:8px;font-family:'Liberation Mono',monospace;font-size:6.6px;letter-spacing:-0.33px"><span style="color:#2f2fe8">&lt;</span><span style="color:#a31515">Grid.RowDefinitions</span><span style="color:#2f2fe8">&gt;</span></div>
<div class="t" style="left:0px;width:8px;text-align:right;top:26.10px;font-size:6.3px;letter-spacing:-0.2px;color:#a0a0a0">31</div>
<div class="t" style="left:68.36px;top:26.50px;line-height:8px;font-family:'Liberation Mono',monospace;font-size:6.6px;letter-spacing:-0.33px"><span style="color:#2f2fe8">&lt;</span><span style="color:#a31515">RowDefinition</span><span style="color:#e8262a"> Height</span><span style="color:#2f2fe8">=&quot;Auto&quot;/&gt;</span></div>
<div class="t" style="left:0px;width:8px;text-align:right;top:33.90px;font-size:6.3px;letter-spacing:-0.2px;color:#a0a0a0">32</div>
<div class="t" style="left:68.36px;top:34.30px;line-height:8px;font-family:'Liberation Mono',monospace;font-size:6.6px;letter-spacing:-0.33px"><span style="color:#2f2fe8">&lt;</span><span style="color:#a31515">RowDefinition</span><span style="color:#e8262a"> Height</span><span style="color:#2f2fe8">=&quot;Auto&quot;/&gt;</span></div>
<div class="t" style="left:0px;width:8px;text-align:right;top:41.70px;font-size:6.3px;letter-spacing:-0.2px;color:#a0a0a0">33</div>
<div class="t" style="left:68.36px;top:42.10px;line-height:8px;font-family:'Liberation Mono',monospace;font-size:6.6px;letter-spacing:-0.33px"><span style="color:#2f2fe8">&lt;</span><span style="color:#a31515">RowDefinition</span><span style="color:#e8262a"> Height</span><span style="color:#2f2fe8">=&quot;*&quot;/&gt;</span></div>
<div class="t" style="left:0px;width:8px;text-align:right;top:49.50px;font-size:6.3px;letter-spacing:-0.2px;color:#a0a0a0">34</div>
<div class="t" style="left:53.84px;top:49.90px;line-height:8px;font-family:'Liberation Mono',monospace;font-size:6.6px;letter-spacing:-0.33px"><span style="color:#2f2fe8">&lt;/</span><span style="color:#a31515">Grid.RowDefinitions</span><span style="color:#2f2fe8">&gt;</span></div>
<div class="t" style="left:0px;width:8px;text-align:right;top:57.30px;font-size:6.3px;letter-spacing:-0.2px;color:#a0a0a0">35</div>
<div class="t" style="left:53.84px;top:57.70px;line-height:8px;font-family:'Liberation Mono',monospace;font-size:6.6px;letter-spacing:-0.33px"><span style="color:#2f2fe8">&lt;</span><span style="color:#a31515">Border</span><span style="color:#e8262a"> x:Name</span><span style="color:#2f2fe8">=&quot;CategoryBackground&quot;</span></div>
<div class="t" style="left:0px;width:8px;text-align:right;top:65.10px;font-size:6.3px;letter-spacing:-0.2px;color:#a0a0a0">36</div>
<div class="t" style="left:82.88px;top:65.50px;line-height:8px;font-family:'Liberation Mono',monospace;font-size:6.6px;letter-spacing:-0.33px"><span style="color:#e8262a">Background</span><span style="color:#2f2fe8">=&quot;</span><span style="color:#2f2fe8;border-bottom:1.3px solid #5a9fd8">$Backstage.Window.Background&quot;</span></div>
<div class="t" style="left:0px;width:8px;text-align:right;top:72.90px;font-size:6.3px;letter-spacing:-0.2px;color:#a0a0a0">37</div>
<div class="t" style="left:82.88px;top:73.30px;line-height:8px;font-family:'Liberation Mono',monospace;font-size:6.6px;letter-spacing:-0.33px"><span style="color:#e8262a">Grid.Row</span><span style="color:#2f2fe8">=&quot;0&quot;</span></div>
<div class="t" style="left:0px;width:8px;text-align:right;top:80.70px;font-size:6.3px;letter-spacing:-0.2px;color:#a0a0a0">38</div>
<div class="t" style="left:82.88px;top:81.10px;line-height:8px;font-family:'Liberation Mono',monospace;font-size:6.6px;letter-spacing:-0.33px"><span style="color:#e8262a">MinHeight</span><span style="color:#2f2fe8">=&quot;{</span><span style="color:#a31515">DynamicResource</span><span style="color:#2f2fe8"> {</span><span style="color:#a31515">dxrt:RibbonThemeKey</span><span style="color:#e8262a"> ResourceKey</span><span style="color:#2f2fe8">=HeaderMinHeight}}&quot;</span></div>
<div class="t" style="left:0px;width:8px;text-align:right;top:88.50px;font-size:6.3px;letter-spacing:-0.2px;color:#a0a0a0">39</div>
<div class="t" style="left:82.88px;top:88.90px;line-height:8px;font-family:'Liberation Mono',monospace;font-size:6.6px;letter-spacing:-0.33px"><span style="color:#e8262a">cs:id</span><span style="color:#2f2fe8">=&quot;Border_0001&quot;/&gt;</span></div>
<div class="t" style="left:0px;width:8px;text-align:right;top:96.30px;font-size:6.3px;letter-spacing:-0.2px;color:#a0a0a0">40</div>
<div class="t" style="left:53.84px;top:96.70px;line-height:8px;font-family:'Liberation Mono',monospace;font-size:6.6px;letter-spacing:-0.33px"><span style="color:#2f2fe8">&lt;</span><span style="color:#a31515">Border</span><span style="color:#e8262a"> x:Name</span><span style="color:#2f2fe8">=&quot;SeparatorBackground&quot;</span></div>
<div class="t" style="left:0px;width:8px;text-align:right;top:104.10px;font-size:6.3px;letter-spacing:-0.2px;color:#a0a0a0">41</div>
<div class="t" style="left:82.88px;top:104.50px;line-height:8px;font-family:'Liberation Mono',monospace;font-size:6.6px;letter-spacing:-0.33px"><span style="color:#e8262a">Background</span><span style="color:#2f2fe8">=&quot;</span><span style="color:#2f2fe8;border-bottom:1.3px solid #5a9fd8">$Backstage.Window.Background&quot;</span></div>
<div class="t" style="left:0px;width:8px;text-align:right;top:111.90px;font-size:6.3px;letter-spacing:-0.2px;color:#a0a0a0">42</div>
<div class="t" style="left:82.88px;top:112.30px;line-height:8px;font-family:'Liberation Mono',monospace;font-size:6.6px;letter-spacing:-0.33px"><span style="color:#e8262a">Grid.Row</span><span style="color:#2f2fe8">=&quot;1&quot;</span></div>
<div class="t" style="left:0px;width:8px;text-align:right;top:119.70px;font-size:6.3px;letter-spacing:-0.2px;color:#a0a0a0">43</div>
<div class="t" style="left:82.88px;top:120.10px;line-height:8px;font-family:'Liberation Mono',monospace;font-size:6.6px;letter-spacing:-0.33px"><span style="color:#e8262a">Height</span><span style="color:#2f2fe8">=&quot;1&quot;</span></div>
<div class="t" style="left:0px;width:8px;text-align:right;top:127.50px;font-size:6.3px;letter-spacing:-0.2px;color:#a0a0a0">44</div>
<div class="t" style="left:82.88px;top:127.90px;line-height:8px;font-family:'Liberation Mono',monospace;font-size:6.6px;letter-spacing:-0.33px"><span style="color:#e8262a">cs:id</span><span style="color:#2f2fe8">=&quot;Border_0002&quot;/&gt;</span></div>
<div class="t" style="left:0px;width:8px;text-align:right;top:135.30px;font-size:6.3px;letter-spacing:-0.2px;color:#a0a0a0">45</div>
<div class="t" style="left:53.84px;top:135.70px;line-height:8px;font-family:'Liberation Mono',monospace;font-size:6.6px;letter-spacing:-0.33px"><span style="color:#2f2fe8">&lt;</span><span style="color:#a31515">Border</span><span style="color:#e8262a"> x:Name</span><span style="color:#2f2fe8">=&quot;PageHeaderBackground&quot;</span></div>
<div class="t" style="left:0px;width:8px;text-align:right;top:143.10px;font-size:6.3px;letter-spacing:-0.2px;color:#a0a0a0">46</div>
<div class="t" style="left:82.88px;top:143.50px;line-height:8px;font-family:'Liberation Mono',monospace;font-size:6.6px;letter-spacing:-0.33px"><span style="color:#e8262a">Background</span><span style="color:#2f2fe8">=&quot;</span><span style="color:#2f2fe8;border-bottom:1.3px solid #5a9fd8">$Backstage.Window.Background&quot;</span></div>
<div class="t" style="left:0px;width:8px;text-align:right;top:150.90px;font-size:6.3px;letter-spacing:-0.2px;color:#a0a0a0">47</div>
<div class="t" style="left:82.88px;top:151.30px;line-height:8px;font-family:'Liberation Mono',monospace;font-size:6.6px;letter-spacing:-0.33px"><span style="color:#e8262a">Grid.Row</span><span style="color:#2f2fe8">=&quot;2&quot;</span></div>
</div>
<div class="a" style="left:567.3px;top:272px;width:8px;height:155px;background:#f0f0f0;border-left:1px solid #dcdcdc"></div>
<svg class="a" style="left:569.5px;top:276px" width="4" height="3" viewBox="0 0 4 3"><path d="M0 2.6h4L2 0.4z" fill="#333"/></svg>
<div class="a" style="left:569.5px;top:337px;width:4px;height:39.5px;background:#a6a6a6"></div>
<svg class="a" style="left:569.5px;top:421.5px" width="4" height="3" viewBox="0 0 4 3"><path d="M0 0.4h4L2 2.6z" fill="#333"/></svg>
<div class="a" style="left:185px;top:427px;width:382.3px;height:9px;background:#f0f0f0;border-top:1px solid #dcdcdc"></div>
<svg class="a" style="left:188px;top:430px" width="3" height="4" viewBox="0 0 3 4"><path d="M2.6 0v4L0.4 2z" fill="#333"/></svg>
<div class="a" style="left:194px;top:430px;width:301.5px;height:4px;background:#a6a6a6"></div>
<svg class="a" style="left:562px;top:430px" width="3" height="4" viewBox="0 0 3 4"><path d="M0.4 0v4L2.6 2z" fill="#333"/></svg>

<!-- right panel -->
<div class="a" style="left:576px;top:60px;width:223px;height:387px;background:#f0f0f0;border-top:1px solid #d4d4d4;border-left:1px solid #c4c4c4;border-right:1px solid #c8c8c8"></div>
<div class="t" style="left:580px;top:62.7px;color:#707070;letter-spacing:-0.42px;-webkit-text-stroke:0.3px #707070">Palette</div>
<svg class="a" style="left:601.5px;top:61.5px" width="4" height="5" viewBox="0 0 4 5"><path d="M0.2 0.3h3.6L2.4 2.2V4.6L1.6 4.2V2.2z" fill="#555"/></svg>
<svg class="a" style="left:782.6px;top:64.5px" width="4" height="5" viewBox="0 0 4 5"><rect x="0.4" y="0" width="3.2" height="3.1" fill="#6a6a6a"/><path d="M2 3v1.8" stroke="#777" stroke-width="0.7"/></svg>
<svg class="a" style="left:790.7px;top:64.5px" width="5" height="5" viewBox="0 0 5 5"><path d="M0.5 0.5L4.5 4.5M4.5 0.5L0.5 4.5" stroke="#555" stroke-width="0.8"/></svg>
<div class="a" style="left:578px;top:75px;width:11px;height:12px;background:#cfcfcf"></div>
<svg class="a" style="left:579px;top:76.5px" width="9" height="9" viewBox="0 0 9 9"><circle cx="2.3" cy="2.5" r="1.5" fill="none" stroke="#555" stroke-width="0.8"/><circle cx="2.3" cy="6.5" r="1.5" fill="none" stroke="#555" stroke-width="0.8"/><path d="M4.5 2.5h4M4.5 6.5h4" stroke="#555" stroke-width="0.8"/></svg>
<svg class="a" style="left:591.5px;top:77px" width="7" height="7" viewBox="0 0 7 7"><rect x="0.5" y="0.5" width="6" height="2.6" fill="#b8b8b8"/><rect x="0.5" y="3.9" width="6" height="2.6" fill="#b8b8b8"/></svg>
<div class="a" style="left:603px;top:75px;width:195px;height:12px;background:#fff;border:1px solid #c8c8c8"></div>
<div class="t" style="left:606px;top:77.5px;color:#aaa;font-size:6.6px;letter-spacing:-0.25px">Search</div>
<div class="a" style="left:577px;top:89.5px;width:214px;height:147px;background:#fff;border-top:1px solid #d8d8d8"></div>
<div class="a" style="left:577px;top:99.95px;width:214px;height:1px;background:#e2e2e2"></div>
<svg class="a" style="left:581px;top:93.50px" width="3" height="3" viewBox="0 0 3 3"><path d="M3 0V3H0z" fill="#333"/></svg>
<div class="t" style="left:587.5px;top:91.10px;font-size:6.8px;font-weight:bold;letter-spacing:-0.3px;color:#222">Backstage</div>
<div class="a" style="left:577px;top:110.40px;width:214px;height:1px;background:#e2e2e2"></div>
<div class="a" style="left:683.5px;top:99.95px;width:1px;height:10.45px;background:#e2e2e2"></div>
<div class="t" style="left:587.5px;top:101.75px;font-size:6.6px;letter-spacing:-0.4px;color:#444">Backstage.Button.Background</div>
<div class="a" style="left:685.5px;top:101.95px;width:6.5px;height:6.5px;background:#015c9f;border:0.6px solid #015c9f"></div>
<div class="t" style="left:694px;top:101.75px;font-size:6.6px;letter-spacing:-0.5px;color:#444">#FF015C9F</div>
<div class="a" style="left:577px;top:120.85px;width:214px;height:1px;background:#e2e2e2"></div>
<div class="a" style="left:683.5px;top:110.40px;width:1px;height:10.45px;background:#e2e2e2"></div>
<div class="t" style="left:587.5px;top:112.20px;font-size:6.6px;letter-spacing:-0.4px;color:#444">Backstage.Delimiter</div>
<div class="a" style="left:685.5px;top:112.40px;width:6.5px;height:6.5px;background:#2a8dd4;border:0.6px solid #2a8dd4"></div>
<div class="t" style="left:694px;top:112.20px;font-size:6.6px;letter-spacing:-0.5px;color:#444">#FF2A8DD4</div>
<div class="a" style="left:577px;top:131.30px;width:214px;height:1px;background:#e2e2e2"></div>
<div class="a" style="left:683.5px;top:120.85px;width:1px;height:10.45px;background:#e2e2e2"></div>
<div class="t" style="left:587.5px;top:122.65px;font-size:6.6px;letter-spacing:-0.4px;color:#444">Backstage.Focused</div>
<div class="a" style="left:685.5px;top:122.85px;width:6.5px;height:6.5px;background:#ffffff;border:0.6px solid #d8d8d8"></div>
<div class="t" style="left:694px;top:122.65px;font-size:6.6px;letter-spacing:-0.3px;color:#444">White</div>
<div class="a" style="left:577px;top:141.75px;width:214px;height:1px;background:#e2e2e2"></div>
<div class="a" style="left:683.5px;top:131.30px;width:1px;height:10.45px;background:#e2e2e2"></div>
<div class="t" style="left:587.5px;top:133.10px;font-size:6.6px;letter-spacing:-0.4px;color:#444">Backstage.Foreground</div>
<div class="a" style="left:685.5px;top:133.30px;width:6.5px;height:6.5px;background:#ffffff;border:0.6px solid #d8d8d8"></div>
<div class="t" style="left:694px;top:133.10px;font-size:6.6px;letter-spacing:-0.3px;color:#444">White</div>
<div class="a" style="left:577px;top:152.20px;width:214px;height:1px;background:#e2e2e2"></div>
<div class="a" style="left:683.5px;top:141.75px;width:1px;height:10.45px;background:#e2e2e2"></div>
<div class="t" style="left:587.5px;top:143.55px;font-size:6.6px;letter-spacing:-0.4px;color:#444">Backstage.HoverBackground</div>
<div class="a" style="left:685.5px;top:143.75px;width:6.5px;height:6.5px;background:#2a8ad4;border:0.6px solid #2a8ad4"></div>
<div class="t" style="left:694px;top:143.55px;font-size:6.6px;letter-spacing:-0.5px;color:#444">#FF2A8AD4</div>
<div class="a" style="left:577px;top:162.65px;width:214px;height:1px;background:#e2e2e2"></div>
<div class="a" style="left:683.5px;top:152.20px;width:1px;height:10.45px;background:#e2e2e2"></div>
<div class="t" style="left:587.5px;top:154.00px;font-size:6.6px;letter-spacing:-0.4px;color:#444">Backstage.SelectionBackground</div>
<div class="a" style="left:685.5px;top:154.20px;width:6.5px;height:6.5px;background:#015c9f;border:0.6px solid #015c9f"></div>
<div class="t" style="left:694px;top:154.00px;font-size:6.6px;letter-spacing:-0.5px;color:#444">#FF015C9F</div>
<div class="a" style="left:577px;top:173.10px;width:214px;height:1px;background:#e2e2e2"></div>
<div class="a" style="left:683.5px;top:162.65px;width:1px;height:10.45px;background:#e2e2e2"></div>
<div class="t" style="left:587.5px;top:164.45px;font-size:6.6px;letter-spacing:-0.4px;color:#444">Backstage.Window.Background</div>
<div class="a" style="left:685.5px;top:164.65px;width:6.5px;height:6.5px;background:#0173c7;border:0.6px solid #0173c7"></div>
<div class="t" style="left:694px;top:164.45px;font-size:6.6px;letter-spacing:-0.5px;color:#444">#FF0173C7</div>
<div class="a" style="left:577px;top:183.55px;width:214px;height:1px;background:#e2e2e2"></div>
<svg class="a" style="left:581px;top:177.10px" width="3" height="3" viewBox="0 0 3 3"><path d="M3 0V3H0z" fill="#333"/></svg>
<div class="t" style="left:587.5px;top:174.70px;font-size:6.8px;font-weight:bold;letter-spacing:-0.3px;color:#222">Button</div>
<div class="a" style="left:577px;top:194.00px;width:214px;height:1px;background:#e2e2e2"></div>
<div class="a" style="left:683.5px;top:183.55px;width:1px;height:10.45px;background:#e2e2e2"></div>
<div class="t" style="left:587.5px;top:185.35px;font-size:6.6px;letter-spacing:-0.4px;color:#444">Button.Background</div>
<div class="a" style="left:685.5px;top:185.55px;width:6.5px;height:6.5px;background:#fdfdfd;border:0.6px solid #d8d8d8"></div>
<div class="t" style="left:694px;top:185.35px;font-size:6.6px;letter-spacing:-0.5px;color:#444">#FFFDFDFD</div>
<div class="a" style="left:577px;top:204.45px;width:214px;height:1px;background:#e2e2e2"></div>
<svg class="a" style="left:581px;top:198.00px" width="3" height="3" viewBox="0 0 3 3"><path d="M3 0V3H0z" fill="#333"/></svg>
<div class="t" style="left:587.5px;top:195.60px;font-size:6.8px;font-weight:bold;letter-spacing:-0.3px;color:#222">Control</div>
<div class="a" style="left:577px;top:214.90px;width:214px;height:1px;background:#e2e2e2"></div>
<div class="a" style="left:683.5px;top:204.45px;width:1px;height:10.45px;background:#e2e2e2"></div>
<div class="t" style="left:587.5px;top:206.25px;font-size:6.6px;letter-spacing:-0.4px;color:#444">Control.Background</div>
<div class="a" style="left:685.5px;top:206.45px;width:6.5px;height:6.5px;background:#f0f0f0;border:0.6px solid #d8d8d8"></div>
<div class="t" style="left:694px;top:206.25px;font-size:6.6px;letter-spacing:-0.5px;color:#444">#FFF0F0F0</div>
<div class="a" style="left:577px;top:225.35px;width:214px;height:1px;background:#e2e2e2"></div>
<svg class="a" style="left:581px;top:218.90px" width="3" height="3" viewBox="0 0 3 3"><path d="M3 0V3H0z" fill="#333"/></svg>
<div class="t" style="left:587.5px;top:216.50px;font-size:6.8px;font-weight:bold;letter-spacing:-0.3px;color:#222">Editor</div>
<div class="a" style="left:577px;top:235.80px;width:214px;height:1px;background:#e2e2e2"></div>
<div class="a" style="left:683.5px;top:225.35px;width:1px;height:10.45px;background:#e2e2e2"></div>
<div class="t" style="left:587.5px;top:227.15px;font-size:6.6px;letter-spacing:-0.4px;color:#444">Editor.Background</div>
<div class="a" style="left:685.5px;top:227.35px;width:6.5px;height:6.5px;background:#ffffff;border:0.6px solid #d8d8d8"></div>
<div class="t" style="left:694px;top:227.15px;font-size:6.6px;letter-spacing:-0.3px;color:#444">White</div>
<div class="a" style="left:791px;top:89.5px;width:7.5px;height:147px;background:#f0f0f0;border-left:1px solid #e0e0e0"></div>
<svg class="a" style="left:793.5px;top:92.5px" width="4" height="3" viewBox="0 0 4 3"><path d="M0 2.6h4L2 0.4z" fill="#333"/></svg>
<div class="a" style="left:793.3px;top:98px;width:3.8px;height:57.5px;background:#a6a6a6"></div>
<svg class="a" style="left:793.5px;top:230.5px" width="4" height="3" viewBox="0 0 4 3"><path d="M0 0.4h4L2 2.6z" fill="#333"/></svg>
<div class="a" style="left:577px;top:236.3px;width:221px;height:11px;background:#ececec;border-top:1px solid #d8d8d8"></div>
<div class="t" style="left:582px;top:239px;font-size:6.6px;letter-spacing:-0.28px;color:#444">Color Editor</div>
<svg class="a" style="left:791px;top:241px" width="5" height="3" viewBox="0 0 5 3"><path d="M0.5 0.3h4L2.5 2.6z" fill="#333"/></svg>
<div class="a" style="left:577px;top:247.3px;width:221px;height:13.2px;background:#ececec;border-top:1px solid #d8d8d8;border-bottom:1px solid #d8d8d8"></div>
<div class="a" style="left:577px;top:247.3px;width:30px;height:13px;background:#f6f6f6;border-right:1px solid #d8d8d8;border-top:1px solid #d8d8d8"></div>
<div class="t" style="left:580px;top:251.3px;font-size:6.6px;letter-spacing:-0.28px;color:#444">Palette</div>
<svg class="a" style="left:601.5px;top:249px" width="4" height="5" viewBox="0 0 4 5"><path d="M0.2 0.3h3.6L2.4 2.2V4.6L1.6 4.2V2.2z" fill="#555"/></svg>
<div class="t" style="left:611.5px;top:251.3px;font-size:6.6px;letter-spacing:-0.28px;color:#444">Individual Colors</div>
<div class="a" style="left:577px;top:260.5px;width:221px;height:13px;background:#f0f0f0"></div>
<div class="t" style="left:580px;top:264px;color:#808080;letter-spacing:-0.32px;-webkit-text-stroke:0.3px #808080">Properties | RibbonControl</div>
<svg class="a" style="left:783.5px;top:265.0px" width="4" height="5" viewBox="0 0 4 5"><rect x="0.4" y="0" width="3.2" height="3.1" fill="#6a6a6a"/><path d="M2 3v1.8" stroke="#777" stroke-width="0.7"/></svg>
<svg class="a" style="left:791.5px;top:265.0px" width="5" height="5" viewBox="0 0 5 5"><path d="M0.5 0.5L4.5 4.5M4.5 0.5L0.5 4.5" stroke="#555" stroke-width="0.8"/></svg>
<div class="a" style="left:577px;top:273.5px;width:221px;height:18.5px;background:#fafafa"></div>
<div class="a" style="left:580px;top:277.4px;width:40.5px;height:11px;background:#efefef;border:1px solid #cfcfcf"></div>
<div class="t" style="left:583px;top:279.8px;font-size:6.6px;letter-spacing:-0.28px;color:#444">Category</div>
<svg class="a" style="left:612.5px;top:281.5px" width="4" height="3" viewBox="0 0 4 3"><path d="M0 2.6h4L2 0.4z" fill="#333"/></svg>
<svg class="a" style="left:788px;top:279.5px" width="8" height="8" viewBox="0 0 8 8"><circle cx="3.3" cy="3.3" r="2.5" fill="none" stroke="#333" stroke-width="0.9"/><path d="M5.2 5.2L7.6 7.6" stroke="#333" stroke-width="1.1"/></svg>
<div class="a" style="left:577px;top:292.2px;width:221px;height:130px;background:#fff;border-top:1px solid #d8d8d8"></div>
<div class="a" style="left:577px;top:292.2px;width:221px;height:11px;background:#ececec;border-bottom:1px solid #d8d8d8"></div>
<div class="a" style="left:577px;top:292.2px;width:6.6px;height:130px;background:#f0f0f0;border-right:1px solid #d8d8d8"></div>
<div class="a" style="left:683.6px;top:292.2px;width:1px;height:11px;background:#d0d0d0"></div>
<div class="a" style="left:744.2px;top:292.2px;width:1px;height:11px;background:#d0d0d0"></div>
<div class="a" style="left:791.0px;top:292.2px;width:1px;height:11px;background:#d0d0d0"></div>
<div class="t" style="left:585.5px;top:295px;font-size:6.6px;letter-spacing:-0.28px;color:#444">Property Name</div>
<div class="t" style="left:686px;top:295px;font-size:6.6px;letter-spacing:-0.28px;color:#444">Value</div>
<div class="t" style="left:746.5px;top:295px;font-size:6.6px;letter-spacing:-0.28px;color:#444">Value Source</div>
<svg class="a" style="left:782.5px;top:294px" width="4" height="4" viewBox="0 0 4 4"><path d="M0.2 0.3h3.6L2.3 1.9V3.8L1.7 3.5V1.9z" fill="#888"/></svg>
<div class="a" style="left:584px;top:304.3px;width:207px;height:12.4px;background:#f9f9f9"></div>
<svg class="a" style="left:594px;top:309.9px" width="3" height="3" viewBox="0 0 3 3"><path d="M3 0V3H0z" fill="#333"/></svg>
<div class="t" style="left:599.6px;top:308.1px;font-size:6.8px;font-weight:bold;letter-spacing:-0.3px;color:#222">Appearance</div>
<div class="a" style="left:577px;top:316.7px;width:7px;height:1px;background:#cccccc"></div>
<div class="a" style="left:577.0px;top:316.7px;width:214.0px;height:1px;background:#e0e0e0"></div>
<div class="a" style="left:683.6px;top:316.7px;width:1px;height:12.4px;background:#dedede"></div>
<div class="a" style="left:744.2px;top:316.7px;width:1px;height:12.4px;background:#dedede"></div>
<div class="t" style="left:601px;top:320.4px;font-size:6.6px;letter-spacing:-0.28px;color:#444">Foreground</div>
<div class="a" style="left:686px;top:321.6px;width:5px;height:5px;background:#444"></div>
<div class="t" style="left:694px;top:320.4px;font-size:6.6px;letter-spacing:-0.28px;color:#444">#FF444444</div>
<div class="t" style="left:746.5px;top:320.4px;font-size:6.6px;letter-spacing:-0.3px;color:#2a6fc0;">Inherited</div>
<div class="a" style="left:577px;top:329.1px;width:7px;height:1px;background:#cccccc"></div>
<div class="a" style="left:583.6px;top:329.1px;width:207.4px;height:1px;background:#e0e0e0"></div>
<div class="a" style="left:584px;top:330.1px;width:207px;height:12.4px;background:#f9f9f9"></div>
<svg class="a" style="left:594px;top:336.1px" width="3" height="3" viewBox="0 0 3 3"><path d="M3 0V3H0z" fill="#333"/></svg>
<div class="t" style="left:599.6px;top:334.3px;font-size:6.8px;font-weight:bold;letter-spacing:-0.3px;color:#222">Layout</div>
<div class="a" style="left:577px;top:342.5px;width:7px;height:1px;background:#cccccc"></div>
<div class="a" style="left:577.0px;top:342.5px;width:214.0px;height:1px;background:#e0e0e0"></div>
<div class="a" style="left:683.6px;top:342.5px;width:1px;height:12.5px;background:#dedede"></div>
<div class="a" style="left:744.2px;top:342.5px;width:1px;height:12.5px;background:#dedede"></div>
<div class="t" style="left:601px;top:346.9px;font-size:6.6px;letter-spacing:-0.28px;color:#444">VerticalAlignment</div>
<div class="t" style="left:686px;top:346.9px;font-size:6.6px;letter-spacing:-0.28px;color:#444">Top</div>
<div class="t" style="left:746.5px;top:346.9px;font-size:6.6px;letter-spacing:-0.3px;color:#2a6fc0;text-decoration:underline;text-decoration-thickness:0.7px;text-decoration-color:#5b9be0;">DefaultStyle</div>
<div class="a" style="left:577px;top:355.0px;width:7px;height:1px;background:#cccccc"></div>
<div class="a" style="left:583.6px;top:355.0px;width:207.4px;height:1px;background:#e0e0e0"></div>
<div class="a" style="left:584px;top:356.0px;width:207px;height:14.7px;background:#f9f9f9"></div>
<svg class="a" style="left:594px;top:361.9px" width="3" height="3" viewBox="0 0 3 3"><path d="M3 0V3H0z" fill="#333"/></svg>
<div class="t" style="left:599.6px;top:360.1px;font-size:6.8px;font-weight:bold;letter-spacing:-0.3px;color:#222">Misc</div>
<div class="a" style="left:577px;top:370.7px;width:7px;height:1px;background:#cccccc"></div>
<div class="a" style="left:577.0px;top:370.7px;width:214.0px;height:1px;background:#e0e0e0"></div>
<div class="a" style="left:683.6px;top:370.7px;width:1px;height:10.5px;background:#dedede"></div>
<div class="a" style="left:744.2px;top:370.7px;width:1px;height:10.5px;background:#dedede"></div>
<div class="t" style="left:601px;top:372.8px;font-size:6.6px;letter-spacing:-0.28px;color:#444">ActualHeaderBorderTemplate</div>
<div class="t" style="left:686px;top:372.8px;font-size:6.6px;letter-spacing:-0.28px;color:#444">ControlTemplate</div>
<div class="a" style="left:577px;top:381.2px;width:7px;height:1px;background:#cccccc"></div>
<div class="a" style="left:599.0px;top:381.2px;width:192.0px;height:1px;background:#e0e0e0"></div>
<div class="a" style="left:683.6px;top:381.2px;width:1px;height:10.2px;background:#dedede"></div>
<div class="a" style="left:744.2px;top:381.2px;width:1px;height:10.2px;background:#dedede"></div>
<div class="t" style="left:601px;top:383.4px;font-size:6.6px;letter-spacing:-0.28px;color:#444">AeroBorderRibbonStyle</div>
<div class="t" style="left:686px;top:383.4px;font-size:6.6px;letter-spacing:-0.28px;color:#444">Office2007</div>
<div class="t" style="left:746.5px;top:383.4px;font-size:6.6px;letter-spacing:-0.3px;color:#2a6fc0;">DefaultStyle</div>
<div class="a" style="left:577px;top:391.4px;width:7px;height:1px;background:#cccccc"></div>
<div class="a" style="left:599.0px;top:391.4px;width:192.0px;height:1px;background:#e0e0e0"></div>
<div class="a" style="left:683.6px;top:391.4px;width:1px;height:10.5px;background:#dedede"></div>
<div class="a" style="left:744.2px;top:391.4px;width:1px;height:10.5px;background:#dedede"></div>
<div class="t" style="left:601px;top:393.8px;font-size:6.6px;letter-spacing:-0.28px;color:#444">AeroBorderTopOffset</div>
<div class="t" style="left:686px;top:393.8px;font-size:6.6px;letter-spacing:-0.28px;color:#444">0</div>
<div class="t" style="left:746.5px;top:393.8px;font-size:6.6px;letter-spacing:-0.3px;color:#2a6fc0;">DefaultStyle</div>
<div class="a" style="left:577px;top:401.9px;width:7px;height:1px;background:#cccccc"></div>
<div class="a" style="left:599.0px;top:401.9px;width:192.0px;height:1px;background:#e0e0e0"></div>
<div class="a" style="left:683.6px;top:401.9px;width:1px;height:10.1px;background:#dedede"></div>
<div class="a" style="left:744.2px;top:401.9px;width:1px;height:10.1px;background:#dedede"></div>
<div class="t" style="left:601px;top:404.1px;font-size:6.6px;letter-spacing:-0.28px;color:#444">AeroTemplate</div>
<div class="t" style="left:686px;top:404.1px;font-size:6.6px;letter-spacing:-0.28px;color:#444">ControlTemplate</div>
<div class="t" style="left:746.5px;top:404.1px;font-size:6.6px;letter-spacing:-0.3px;color:#2a6fc0;">DefaultStyle</div>
<div class="a" style="left:577px;top:412.0px;width:7px;height:1px;background:#cccccc"></div>
<div class="a" style="left:599.0px;top:412.0px;width:192.0px;height:1px;background:#e0e0e0"></div>
<div class="a" style="left:683.6px;top:412.0px;width:1px;height:10.5px;background:#dedede"></div>
<div class="a" style="left:744.2px;top:412.0px;width:1px;height:10.5px;background:#dedede"></div>
<div class="t" style="left:601px;top:414.8px;font-size:6.6px;letter-spacing:-0.28px;color:#444">ApplicationButton2007Style</div>
<div class="t" style="left:686px;top:414.8px;font-size:6.6px;letter-spacing:-0.28px;color:#444">Style</div>
<div class="t" style="left:746.5px;top:414.8px;font-size:6.6px;letter-spacing:-0.3px;color:#2a6fc0;">DefaultStyle</div>
<div class="a" style="left:577px;top:422.5px;width:7px;height:1px;background:#cccccc"></div>
<div class="a" style="left:599.0px;top:422.5px;width:192.0px;height:1px;background:#e0e0e0"></div>
<svg class="a" style="left:761.5px;top:351px" width="9" height="13" viewBox="0 0 9 13"><path d="M2.5 1.2c0-1 1.5-1 1.5 0V5.5c0.3-0.8 1.4-0.8 1.5 0c0.3-0.7 1.4-0.7 1.5 0.2c0.3-0.6 1.3-0.5 1.3 0.4V9.5c0 1.5-1 2.8-2.5 2.8H4.2C3 12.3 2.2 11.4 1.5 10.3L0.4 7.5c-0.3-0.8 0.7-1.3 1.2-0.6L2.5 8z" fill="#fff" stroke="#222" stroke-width="0.7"/></svg>
<div class="a" style="left:791px;top:303.3px;width:7.5px;height:119px;background:#f0f0f0;border-left:1px solid #e0e0e0"></div>
<svg class="a" style="left:793.5px;top:306px" width="4" height="3" viewBox="0 0 4 3"><path d="M0 2.6h4L2 0.4z" fill="#333"/></svg>
<div class="a" style="left:793.5px;top:312.5px;width:3.6px;height:16px;background:#a6a6a6"></div>
<svg class="a" style="left:793.5px;top:416px" width="4" height="3" viewBox="0 0 4 3"><path d="M0 0.4h4L2 2.6z" fill="#333"/></svg>
<div class="a" style="left:577px;top:422px;width:221px;height:13.5px;background:#fff;border-top:1px solid #d8d8d8;border-bottom:1px solid #d8d8d8"></div>
<div class="a" style="left:579.5px;top:426.5px;width:6.5px;height:6.5px;background:#fff;border:1px solid #aaa"></div>
<svg class="a" style="left:580px;top:427px" width="6" height="6" viewBox="0 0 6 6"><path d="M0.8 3l1.6 1.8L5.3 0.8" fill="none" stroke="#333" stroke-width="0.8"/></svg>
<div class="t" style="left:589px;top:425.5px;font-size:6.6px;letter-spacing:-0.3px;color:#444">[Value Source] &lt;&gt; 'Default'</div>
<svg class="a" style="left:776.5px;top:425px" width="8" height="8" viewBox="0 0 8 8"><circle cx="4" cy="4" r="3.8" fill="#8a8a8a"/><path d="M2.2 5.8L5.6 2.4" stroke="#fff" stroke-width="1.2"/></svg>
<svg class="a" style="left:788.5px;top:425px" width="8" height="8" viewBox="0 0 8 8"><circle cx="4" cy="4" r="3.8" fill="#8a8a8a"/><path d="M2.4 2.4L5.6 5.6M5.6 2.4L2.4 5.6" stroke="#fff" stroke-width="1"/></svg>

<!-- bottom tabs -->
<div class="a" style="left:1px;top:425.2px;width:184px;height:11px;background:#ebebeb;border-top:1px solid #d8d8d8"></div>
<div class="t" style="left:3.5px;top:427px;font-size:6.6px;letter-spacing:-0.22px;color:#444">Navigation</div>
<div class="t" style="left:38.5px;top:427px;font-size:6.6px;letter-spacing:-0.22px;color:#444">Solution</div>
<div class="a" style="left:63.3px;top:425.2px;width:34.5px;height:11px;background:#f7f7f7;border-left:1px solid #d4d4d4;border-right:1px solid #d4d4d4"></div>
<div class="t" style="left:66px;top:427px;font-size:6.6px;letter-spacing:-0.28px;color:#444">Visual Tree</div>
<div class="a" style="left:1px;top:436.2px;width:798px;height:10.8px;background:#f0f0f0;border-top:1px solid #d8d8d8"></div>
<div class="a" style="left:1px;top:436.2px;width:24px;height:10.8px;background:#ebebeb;border-top:1px solid #d8d8d8;border-right:1px solid #d4d4d4"></div>
<div class="t" style="left:3px;top:439px;font-size:6.6px;letter-spacing:-0.22px;color:#444">Output</div>
<!-- status bar -->
<div class="a" style="left:1px;top:447px;width:798px;height:12px;background:#3c3c3c"></div>
<div class="t" style="left:722.7px;top:449.8px;color:#e0e0e0;font-size:7px;letter-spacing:-0.4px">Zoom</div>
<div class="a" style="left:744px;top:453px;width:5.5px;height:0.8px;background:#999"></div>
<div class="t" style="left:755.6px;top:449.8px;color:#e0e0e0;font-size:6.8px;letter-spacing:-0.45px">100%</div>
<svg class="a" style="left:775.5px;top:450px" width="7" height="7" viewBox="0 0 7 7"><path d="M3.5 0.5v6M0.5 3.5h6" stroke="#fff" stroke-width="1.1"/></svg>
<svg class="a" style="left:792px;top:451px" width="7" height="8" viewBox="0 0 7 8"><path d="M6 1.5L6 7L0.5 7z" fill="#6a6a6a"/></svg>
</body></html>
